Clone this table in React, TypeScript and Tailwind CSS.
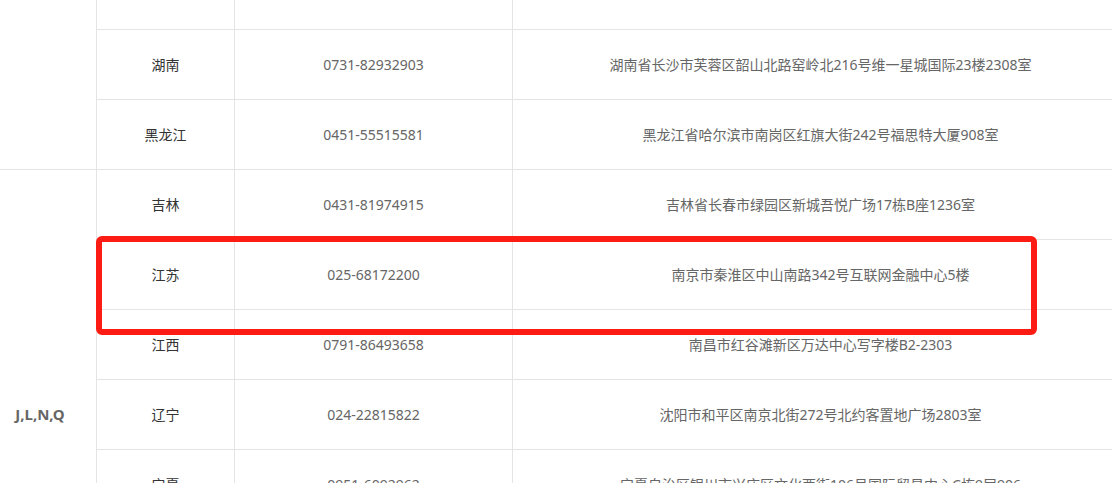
const rows = [
  { prov: "", phone: "", addr: "" },
  { prov: "湖南", phone: "0731-82932903", addr: "湖南省长沙市芙蓉区韶山北路窑岭北216号维一星城国际23楼2308室" },
  { prov: "黑龙江", phone: "0451-55515581", addr: "黑龙江省哈尔滨市南岗区红旗大街242号福思特大厦908室" },
];

const group2 = [
  { prov: "吉林", phone: "0431-81974915", addr: "吉林省长春市绿园区新城吾悦广场17栋B座1236室" },
  { prov: "江苏", phone: "025-68172200", addr: "南京市秦淮区中山南路342号互联网金融中心5楼" },
  { prov: "江西", phone: "0791-86493658", addr: "南昌市红谷滩新区万达中心写字楼B2-2303" },
  { prov: "辽宁", phone: "024-22815822", addr: "沈阳市和平区南京北街272号北约客置地广场2803室" },
  { prov: "宁夏", phone: "0951-6092962", addr: "宁夏自治区银川市兴庆区文化西街106号国际贸易中心C栋9层906" },
  { prov: "内蒙古", phone: "0471-6925651", addr: "内蒙古呼和浩特市赛罕区敕勒川大街东方君座B座1607" },
  { prov: "青海", phone: "0971-6316086", addr: "青海省西宁市城西区五四西路青海大厦1203室" },
];

const cell = "border border-[#e4e4e4] text-center align-middle h-[70px] p-0";

function Row({ r, lead }: { r: { prov: string; phone: string; addr: string }; lead?: React.ReactNode }) {
  return (
    <tr>
      {lead}
      <td className={`${cell} text-[#333]`}>{r.prov}</td>
      <td className={`${cell} text-[#666]`}>{r.phone}</td>
      <td className={`${cell} text-[#666]`}>{r.addr}</td>
    </tr>
  );
}

export default function App() {
  return (
    <div
      className="relative w-[1112px] h-[483px] overflow-hidden bg-white text-[14px]"
      style={{ fontFamily: '"Noto Sans", "Noto Sans CJK SC", sans-serif' }}
    >
      <table className="table-fixed border-collapse w-[1146px] mt-[-41px] ml-[-17px]">
        <colgroup>
          <col className="w-[113px]" />
          <col className="w-[138px]" />
          <col className="w-[278px]" />
          <col />
        </colgroup>
        <tbody>
          {rows.map((r, i) => (
            <Row
              key={r.prov || i}
              r={r}
              lead={i === 0 ? <td rowSpan={3} className={cell} /> : undefined}
            />
          ))}
          {group2.map((r, i) => (
            <Row
              key={r.prov}
              r={r}
              lead={
                i === 0 ? (
                  <td rowSpan={group2.length} className={`${cell} font-bold text-[15px] text-[#666]`}>
                    J,L,N,Q
                  </td>
                ) : undefined
              }
            />
          ))}
        </tbody>
      </table>
      <div className="absolute left-[96px] top-[236px] w-[941px] h-[99px] border-[6px] border-[#fd1c14] rounded-[6px]" />
    </div>
  );
}
